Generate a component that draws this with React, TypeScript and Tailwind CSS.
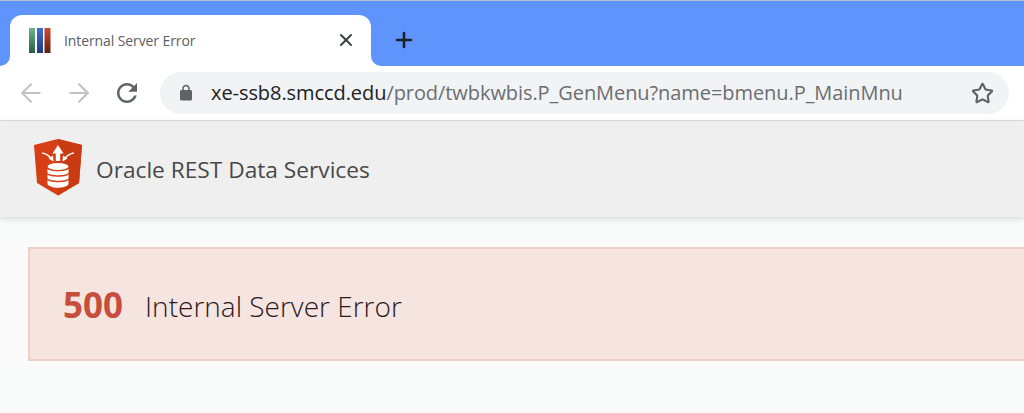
import { X, Plus, ArrowLeft, ArrowRight, Star } from "lucide-react";

const FONT = "font-['Open_Sans','Noto_Sans',sans-serif]";

function Favicon() {
  return (
    <svg width="22" height="25" viewBox="0 0 22 25" className="shrink-0">
      <defs>
        <linearGradient id="fg" x1="0" y1="0" x2="0" y2="1">
          <stop offset="0" stopColor="#6fb58d" />
          <stop offset="1" stopColor="#2f5a45" />
        </linearGradient>
        <linearGradient id="fb" x1="0" y1="0" x2="0" y2="1">
          <stop offset="0" stopColor="#3f6fdc" />
          <stop offset="1" stopColor="#1f3a78" />
        </linearGradient>
        <linearGradient id="fr" x1="0" y1="0" x2="0" y2="1">
          <stop offset="0" stopColor="#d2492a" />
          <stop offset="1" stopColor="#5f2114" />
        </linearGradient>
      </defs>
      <rect x="0" y="0" width="6" height="25" fill="url(#fg)" />
      <rect x="8" y="0" width="6" height="25" fill="url(#fb)" />
      <rect x="15.5" y="0" width="6" height="25" fill="url(#fr)" />
    </svg>
  );
}

function OrdsLogo() {
  return (
    <svg width="50" height="57" viewBox="0 0 50 57" className="-mt-[3px] shrink-0">
      <path d="M25 0 L49 6 L46 44 L25 56.500 L4 44 L1 6 Z" fill="#d63f14" />
      <path d="M25 0 L49 6 L46 44 L25 56.500 Z" fill="#cb3b12" />
      {/* up arrow */}
      <path d="M25 6 L30.500 14.500 L27.200 14.500 L27.200 22 L22.800 22 L22.800 14.500 L19.500 14.500 Z" fill="#fff" />
      {/* side arrows */}
      <path d="M9 14 C13 14.500 16 16.500 18.500 20" stroke="#fff" strokeWidth="1.300" fill="none" />
      <path d="M15.500 19.500 L20.500 22.500 L20 16.500 Z" fill="#fff" />
      <path d="M41 14 C37 14.500 34 16.500 31.500 20" stroke="#fff" strokeWidth="1.300" fill="none" />
      <path d="M34.500 19.500 L29.500 22.500 L30 16.500 Z" fill="#fff" />
      {/* database */}
      <ellipse cx="25" cy="27.500" rx="10.500" ry="3.500" fill="#fff" />
      <path d="M14.500 30 C17 33 33 33 35.500 30 L35.500 34 C33 37 17 37 14.500 34 Z" fill="#fff" />
      <path d="M14.500 35.500 C17 38.500 33 38.500 35.500 35.500 L35.500 39.500 C33 42.500 17 42.500 14.500 39.500 Z" fill="#fff" />
      <path d="M14.500 41 C17 44 33 44 35.500 41 L35.500 45 C33 50 17 50 14.500 45 Z" fill="#fff" />
    </svg>
  );
}

function ReloadIcon() {
  return (
    <svg width="30" height="30" viewBox="0 0 24 24" fill="#5f6368" className="ml-[18px] shrink-0">
      <path d="M17.650 6.350C16.200 4.900 14.210 4 12 4c-4.420 0-7.990 3.580-7.990 8s3.570 8 7.990 8c3.730 0 6.840-2.550 7.730-6h-2.080c-.820 2.330-3.040 4-5.650 4-3.310 0-6-2.690-6-6s2.690-6 6-6c1.660 0 3.140.690 4.220 1.780L13 11h7V4l-2.350 2.350z" />
    </svg>
  );
}

function LockIcon() {
  return (
    <svg width="18" height="18" viewBox="0 0 24 24" fill="#5f6368" className="-ml-[2px] shrink-0">
      <path d="M18 8h-1V6c0-2.760-2.240-5-5-5S7 3.240 7 6v2H6c-1.100 0-2 .900-2 2v10c0 1.100.900 2 2 2h12c1.100 0 2-.900 2-2V10c0-1.100-.900-2-2-2zM9 6c0-1.660 1.340-3 3-3s3 1.340 3 3v2H9V6z" />
    </svg>
  );
}

export default function App() {
  return (
    <div className={`${FONT} flex h-[413px] w-[1024px] flex-col overflow-hidden bg-[#f9fbfa]`}>
      {/* tab strip */}
      <div className="flex h-[66px] shrink-0 items-end border-t border-[#b9c0cc] bg-[#5e94fb] pl-[10px]">
        <div className="relative flex h-[51px] w-[361px] items-center rounded-t-[12px] bg-white pl-[19px] pr-[15px]">
          <span className="absolute -left-[10px] bottom-0 h-[10px] w-[10px] bg-white" />
          <span className="absolute -left-[10px] bottom-0 h-[10px] w-[10px] rounded-br-[10px] bg-[#5e94fb]" />
          <span className="absolute -right-[10px] bottom-0 h-[10px] w-[10px] bg-white" />
          <span className="absolute -right-[10px] bottom-0 h-[10px] w-[10px] rounded-bl-[10px] bg-[#5e94fb]" />
          <Favicon />
          <span className="ml-[13px] flex-1 text-[14px] tracking-[-0.1px] text-[#5b5e62]">Internal Server Error</span>
          <X size={20} strokeWidth={2.4} className="-mt-[2px] text-[#3c4043]" />
        </div>
        <div className="mb-[14px] ml-[21px]">
          <Plus size={24} strokeWidth={2.6} className="text-[#202124]" />
        </div>
      </div>

      {/* address bar */}
      <div className="flex h-[55px] shrink-0 items-center border-b border-[#dadce0] bg-white pl-[16px] pr-[15px]">
        <ArrowLeft size={30} strokeWidth={1.6} className="text-[#c0c2c5]" />
        <ArrowRight size={30} strokeWidth={1.6} className="ml-[18px] text-[#c0c2c5]" />
        <ReloadIcon />
        <div className="ml-[18px] flex h-[42px] flex-1 items-center rounded-full bg-[#f1f3f4] pl-[19px] pr-[15px]">
          <LockIcon />
          <div className="ml-[16px] flex-1 whitespace-nowrap text-[20px] tracking-[-0.07px] text-[#6b6e72]">
            <span className="text-[#202124]">xe-ssb8.smccd.edu</span>/prod/twbkwbis.P_GenMenu?name=bmenu.P_MainMnu
          </div>
          <Star size={23} strokeWidth={2.2} className="text-[#5f6368]" />
        </div>
      </div>

      {/* ORDS header */}
      <div className="flex h-[96px] shrink-0 items-center bg-[#efefef] pl-[33px] shadow-[0_2px_6px_rgba(0,0,0,0.14)]">
        <OrdsLogo />
        <span className="ml-[13px] mt-[3px] text-[22.7px] text-[#484848]">Oracle REST Data Services</span>
      </div>

      {/* error */}
      <div className="ml-[28px] mr-[-10px] mt-[30px] flex h-[114px] shrink-0 items-center border-2 border-[#f0cdc6] bg-[#f6e4e1] pl-[33px] pt-[3px]">
        <span className="text-[35px] font-bold text-[#c64f3b]">500</span>
        <span className="ml-[22px] text-[28px] font-light text-[#2a1a1d]">Internal Server Error</span>
      </div>
    </div>
  );
}
